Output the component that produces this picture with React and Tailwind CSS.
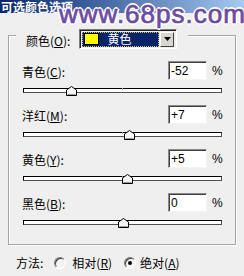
import React from 'react';

const cjk = { fontFamily: '"Noto Sans CJK SC", "Liberation Sans", sans-serif' };

const rows = [
    { name: '青色', key: 'C', value: '-52', pos: 48 },
    { name: '洋红', key: 'M', value: '+7', pos: 106 },
    { name: '黄色', key: 'Y', value: '+5', pos: 104 },
    { name: '黑色', key: 'B', value: '0', pos: 100 },
];

const Label = ({ name, k }) => (
    <span className="text-[12px] leading-none text-black" style={cjk}>
        {name}(<span className="underline underline-offset-1">{k}</span>):
    </span>
);

const Thumb = ({ left }) => (
    <svg className="absolute top-[2px]" style={{ left }} width="11" height="10" viewBox="0 0 11 10">
        <polygon points="0.5,9.5 0.5,4 5.5,0.5 10.5,4 10.5,9.5" fill="#f6f6f6" stroke="#000" strokeWidth="1" />
        <line x1="1.5" y1="8.5" x2="9.5" y2="8.5" stroke="#9a9a9a" />
    </svg>
);

const Row = ({ name, k, value, pos }) => (
    <div className="flex flex-col mb-[7px]">
        <div className="flex items-center h-[19px]">
            <div className="w-[159px] pl-[13px] pt-[1px]">
                <Label name={name} k={k} />
            </div>
            <div className="w-[39px] h-[19px] bg-white border-t border-l border-t-[#8a8a8a] border-l-[#8a8a8a] border-b border-r border-b-[#f4f4f4] border-r-[#f4f4f4] shadow-[inset_1px_1px_0_#404040] flex items-center pl-[2px]">
                <span className="text-[12px] leading-none text-black" style={{ fontFamily: '"Liberation Sans", sans-serif' }}>{value}</span>
            </div>
            <span className="ml-[5px] text-[12px] leading-none text-black" style={{ fontFamily: '"Liberation Sans", sans-serif' }}>%</span>
        </div>
        <div className="relative mt-[4px] h-[14px] ml-[14px] w-[199px]">
            <div className="mt-[4px] h-[5px] bg-white border border-t-black border-l-black border-b-[#505050] border-r-[#505050]" />
            <div className="absolute top-[4px] left-[99px] w-px h-[2px] bg-[#a0a0a0]" />
            <Thumb left={pos - 5} />
        </div>
    </div>
);

const Radio = ({ checked }) => (
    <span className="w-[12px] h-[12px] rounded-full border border-t-[#7a7a7a] border-l-[#7a7a7a] border-b-white border-r-white bg-[#f4f4f4] flex items-center justify-center shadow-[inset_1px_1px_0_#404040]">
        {checked && <span className="w-[4px] h-[4px] rounded-full bg-black" />}
    </span>
);

export default function App() {
    return (
        <div className="relative w-[244px] h-[276px] overflow-hidden bg-[#efefef]">
            {/* Title bar */}
            <div className="h-[13px] bg-gradient-to-r from-[#0a246a] to-[#a6caf0] flex items-center pl-[1px] overflow-hidden">
                <span className="text-[12px] leading-[13px] font-bold text-white whitespace-nowrap" style={cjk}>可选颜色选项</span>
            </div>

            {/* Group box */}
            <div className="mt-[22px] ml-[8px] w-[228px] border border-[#a4a4a4] shadow-[inset_1px_1px_0_#ffffff,1px_1px_0_#ffffff] pb-[7px]">
                <div className="flex items-center -mt-[7px] h-[20px]">
                    <div className="ml-[7px] w-[172px] h-[20px] bg-[#efefef] flex items-center">
                        <span className="ml-[10px] pt-[1px]">
                            <span className="text-[12px] leading-none text-black" style={cjk}>
                                颜色(<span className="underline underline-offset-1">O</span>):
                            </span>
                        </span>
                        <div className="ml-[9px] w-[98px] h-[20px] border border-t-[#7a7a7a] border-l-[#7a7a7a] border-b-white border-r-white shadow-[inset_1px_1px_0_#202020] flex items-center p-[2px]">
                            <div className="flex-1 h-[15px] bg-[#0a246a] outline outline-1 outline-dotted outline-[#c8c060] -outline-offset-1 flex items-center pl-[2px]">
                                <span className="w-[15px] h-[12px] bg-[#ffff00] border border-black" />
                                <span className="ml-[8px] text-[12px] leading-none text-white" style={cjk}>黄色</span>
                            </div>
                            <div className="w-[14px] h-[15px] ml-[1px] bg-[#d8d6d0] border border-t-white border-l-white border-b-[#404040] border-r-[#404040] flex items-center justify-center">
                                <svg width="7" height="4" viewBox="0 0 7 4">
                                    <polygon points="0,0 7,0 3.5,4" fill="#000" />
                                </svg>
                            </div>
                        </div>
                    </div>
                </div>

                <div className="mt-[12px] flex flex-col">
                    {rows.map((r) => (
                        <Row key={r.key} name={r.name} k={r.key} value={r.value} pos={r.pos} />
                    ))}
                </div>
            </div>

            {/* Method */}
            <div className="mt-[11px] ml-[16px] flex items-center h-[14px]">
                <span className="text-[12px] leading-none text-black" style={cjk}>方法:</span>
                <span className="ml-[11px]"><Radio /></span>
                <span className="ml-[6px] text-[12px] leading-none text-black" style={cjk}>
                    相对(<span className="underline underline-offset-1">R</span>)
                </span>
                <span className="ml-[12px]"><Radio checked /></span>
                <span className="ml-[4px] text-[12px] leading-none text-black" style={cjk}>
                    绝对(<span className="underline underline-offset-1">A</span>)
                </span>
            </div>

            {/* Watermark */}
            <div
                className="absolute left-[59px] top-[1px] text-[26px] leading-none tracking-[1px] text-[#6c4c9e] pointer-events-none whitespace-nowrap"
                style={{
                    fontFamily: '"Liberation Sans", Arial, sans-serif',
                    WebkitTextStroke: '0.7px #6c4c9e',
                    textShadow: '2px 0 0 #fff, -2px 0 0 #fff, 0 2px 0 #fff, 0 -2px 0 #fff, 1px 1px 0 #fff, -1px -1px 0 #fff, 1px -1px 0 #fff, -1px 1px 0 #fff, 0 0 3px #e8d8ff',
                }}
            >
                www.68ps.com
            </div>
        </div>
    );
}
